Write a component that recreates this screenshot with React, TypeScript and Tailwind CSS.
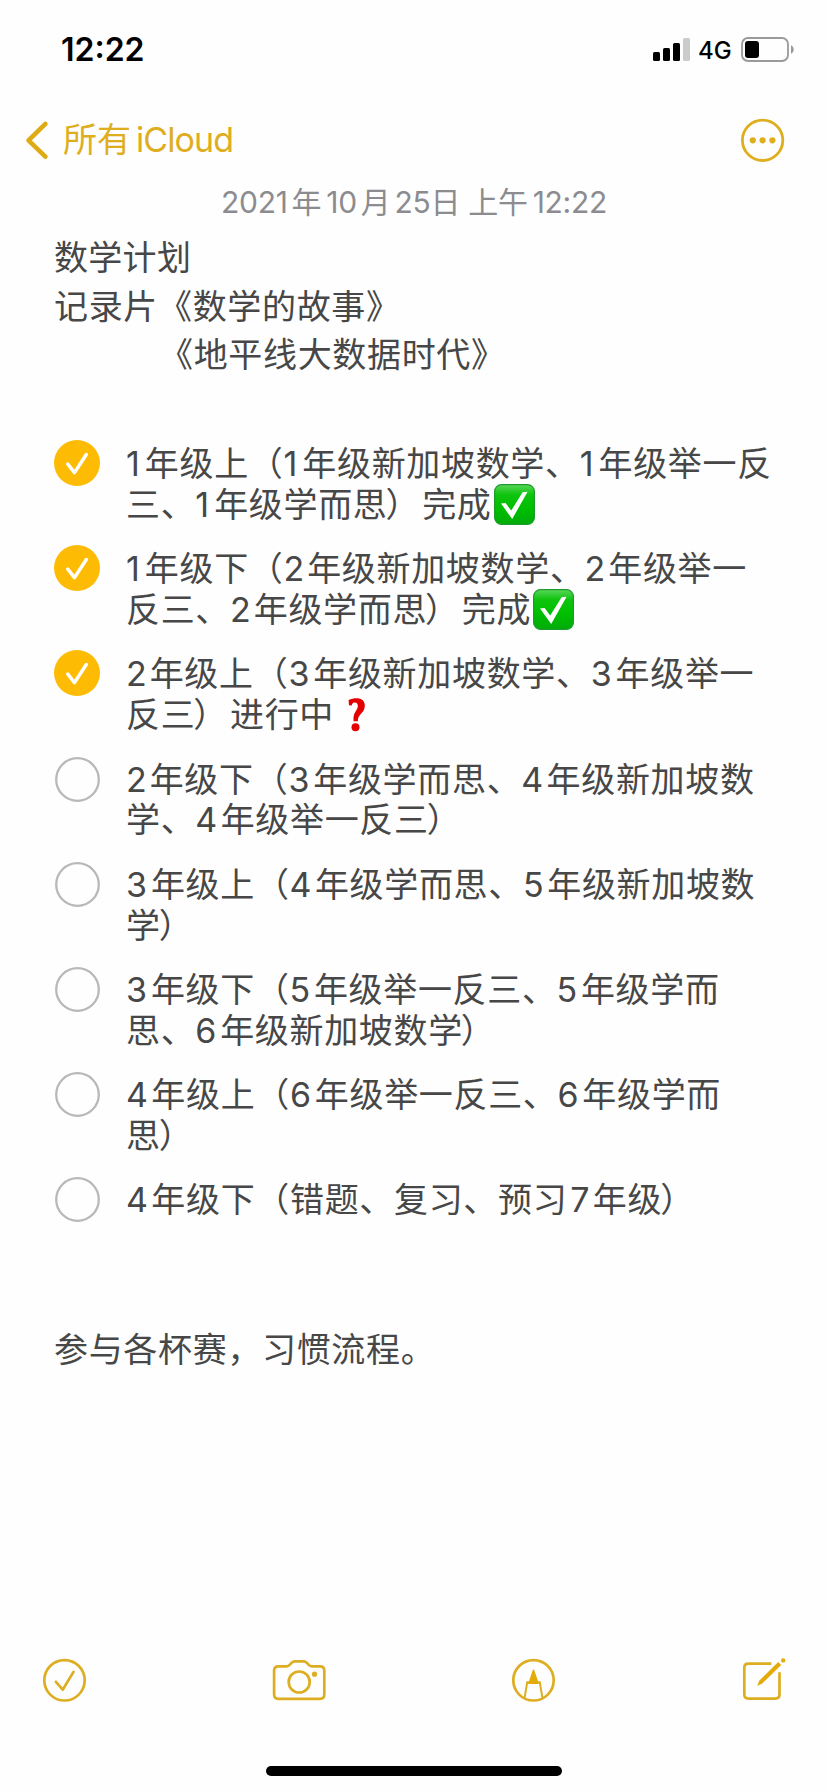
import React from "react";

type Item = {
  done: boolean;
  lines: string[];
};

const items: Item[] = [
  { done: true, lines: ["1年级上（1年级新加坡数学、1年级举一反", "三、1年级学而思）完成✅"] },
  { done: true, lines: ["1年级下（2年级新加坡数学、2年级举一", "反三、2年级学而思）完成✅"] },
  { done: true, lines: ["2年级上（3年级新加坡数学、3年级举一", "反三）进行中❓"] },
  { done: false, lines: ["2年级下（3年级学而思、4年级新加坡数", "学、4年级举一反三）"] },
  { done: false, lines: ["3年级上（4年级学而思、5年级新加坡数", "学）"] },
  { done: false, lines: ["3年级下（5年级举一反三、5年级学而", "思、6年级新加坡数学）"] },
  { done: false, lines: ["4年级上（6年级举一反三、6年级学而", "思）"] },
  { done: false, lines: ["4年级下（错题、复习、预习7年级）"] },
];

const digitWidth: Record<string, string> = {
  "1": "w-[18.8px]",
  "2": "w-[23.7px]",
  "3": "w-[24.9px]",
  "4": "w-[25.3px]",
  "5": "w-[24.3px]",
  "6": "w-[24.8px]",
  "7": "w-[25.5px] pl-[3px]",
};

const CheckEmoji = () => (
  <svg width="41" height="41" viewBox="0 0 41 41" className="ml-[2px] inline-block align-[-8px]">
    <defs>
      <linearGradient id="green" x1="0" y1="0" x2="0" y2="1">
        <stop offset="0" stopColor="#5bd65b" />
        <stop offset="0.25" stopColor="#0fc40f" />
        <stop offset="0.6" stopColor="#00bf00" />
        <stop offset="1" stopColor="#00ac0a" />
      </linearGradient>
    </defs>
    <rect x="0.6" y="0.6" width="39.8" height="39.8" rx="7" fill="url(#green)" stroke="#1c9c2a" strokeWidth="1.2" />
    <path d="M7 19.6l4.6-.6 5.6 7.6L28.600 8.200l5-.4L18.200 35z" fill="#fff" />
  </svg>
);

const QuestionEmoji = () => (
  <svg width="18" height="34" viewBox="0 0 18 34" className="ml-[14px] inline-block align-[-5px]">
    <path
      d="M.6 2C4 .4 7 0 9.600.2c4.800.4 7.400 3.400 7.200 7.600-.2 4.400-2.200 6.400-4.600 9-1.800 2-2.200 3.400-2.400 6.400H5.600c-.4-4.400.2-6.800 2-9.600 1.600-2.400 2.400-4 2.200-6-.2-2.400-1.400-3.400-3.400-3.200-1.600.2-2.400 1.200-2.600 3L1 7.200z"
      fill="#e30000"
    />
    <circle cx="7.500" cy="29.200" r="4" fill="#e30000" />
  </svg>
);

const Line = ({ text }: { text: string }) => (
  <p className="h-[40.700px] whitespace-nowrap">
    {Array.from(text).map((ch, i) => {
      if (ch === "✅") return <CheckEmoji key={i} />;
      if (ch === "❓") return <QuestionEmoji key={i} />;
      if (digitWidth[ch]) {
        return (
          <span key={i} className={`inline-block tracking-normal ${digitWidth[ch]}`}>
            {ch}
          </span>
        );
      }
      // closing bracket sits tighter to the character before it
      if (ch === "）") {
        return (
          <span key={i} className="mr-[2px] -ml-[2px]">
            {ch}
          </span>
        );
      }
      return ch;
    })}
  </p>
);

const Bullet = ({ done }: { done: boolean }) =>
  done ? (
    <svg width="46" height="46" viewBox="0 0 46 46" className="shrink-0">
      <circle cx="23" cy="23" r="23" fill="#fdbb04" />
      <path d="M13.700 24l6.800 8.600L32.300 14.500" fill="none" stroke="#fff" strokeWidth="3.500" strokeLinecap="round" strokeLinejoin="round" />
    </svg>
  ) : (
    <svg width="46" height="46" viewBox="0 0 46 46" className="shrink-0">
      <circle cx="23.500" cy="23.500" r="21.300" fill="none" stroke="#b8b8b8" strokeWidth="2.300" />
    </svg>
  );

const StatusBar = () => (
  <div className="flex h-[98px] justify-between pl-[61px] pr-[34px] text-black">
    <span className="mt-[30px] font-[Inter] text-[32px] leading-[40px] font-semibold">12:22</span>
    <div className="mt-[37px] flex h-[25px] items-start">
      <svg width="38" height="25" viewBox="0 0 38 25">
        <rect x="0" y="15" width="7" height="9" rx="1.500" />
        <rect x="10" y="11" width="7" height="13" rx="1.500" />
        <rect x="20" y="6" width="7" height="18" rx="1.500" />
        <rect x="30" y="1" width="7" height="23" rx="1.500" fill="#cbcbcb" />
      </svg>
      <span className="ml-[7px] w-[43px] font-[Inter] text-[24px] leading-[27px] font-medium">4G</span>
      <svg width="53" height="25" viewBox="0 0 53 25">
        <rect x="1" y="1" width="46" height="23" rx="6" fill="none" stroke="#9a9a9a" strokeWidth="1.800" />
        <rect x="4" y="4" width="14" height="17" rx="3" />
        <path d="M50 8.300c3.600 1.400 3.600 7 0 8.400z" fill="#9a9a9a" />
      </svg>
    </div>
  </div>
);

const NavBar = () => (
  <div className="flex h-[84px] items-center justify-between pr-[43px] pl-[25px] text-[#dfae1f]">
    <button className="flex items-center">
      <svg width="24" height="40" viewBox="0 0 24 40" fill="none" stroke="#dfab14" strokeWidth="4.600" strokeLinecap="round" strokeLinejoin="round">
        <path d="M20.400 3.900L3.500 20.300l16.900 16.400" />
      </svg>
      <span className="ml-[14px] text-[34px] leading-[44px] whitespace-nowrap">
        所有<span className="ml-[5px] tracking-[-0.9px]">iCloud</span>
      </span>
    </button>
    <svg width="44" height="44" viewBox="0 0 44 44">
      <circle cx="21.600" cy="22.300" r="20.200" fill="none" stroke="currentColor" strokeWidth="2.800" />
      <circle cx="11.800" cy="22.300" r="3.100" fill="currentColor" />
      <circle cx="21.600" cy="22.300" r="3.100" fill="currentColor" />
      <circle cx="31.400" cy="22.300" r="3.100" fill="currentColor" />
    </svg>
  </div>
);

const Toolbar = () => (
  <div className="flex items-center justify-between pr-[42px] pl-[42px] text-[#ddae22]">
    <svg width="44" height="44" viewBox="0 0 44 44" fill="none" stroke="currentColor" strokeWidth="2.700" strokeLinecap="round" strokeLinejoin="round">
      <circle cx="22.500" cy="22.300" r="20.200" />
      <path d="M13.900 23.800l6.800 7.900 10.800-17.800" />
    </svg>
    <svg width="54" height="44" viewBox="0 0 54 44" fill="none" stroke="currentColor" strokeWidth="2.700" strokeLinejoin="round">
      <path d="M6.300 8.300h8.300c1.600 0 2.400-.7 3.300-1.700l1.900-2c.8-.8 1.500-1.200 2.800-1.200h9.200c1.300 0 2 .4 2.800 1.200l1.900 2c.9 1 1.700 1.700 3.300 1.700h8.300c2.700 0 4.200 1.500 4.200 4.200v24.100c0 2.700-1.500 4.200-4.200 4.200H6.300c-2.700 0-4.200-1.500-4.200-4.200V12.500c0-2.700 1.500-4.200 4.200-4.200z" />
      <circle cx="27.200" cy="24" r="10.500" />
      <circle cx="42.500" cy="16.200" r="2.600" fill="currentColor" stroke="none" />
    </svg>
    <svg width="44" height="44" viewBox="0 0 44 44" fill="none" stroke="currentColor" strokeWidth="2.700">
      <circle cx="21.500" cy="22.300" r="20.200" />
      <path d="M20.600 12.500c.4-1.300 1.400-1.300 1.800 0l4.600 13.400H16z" fill="#e3ab08" stroke="none" />
      <path d="M17 24.300h-1.800l-2.600 15.500M26 24.300h1.800l2.600 15.500" strokeWidth="2" />
    </svg>
    <svg width="44" height="44" viewBox="0 0 44 44" fill="none" stroke="currentColor" strokeWidth="2.700">
      <path d="M29.300 5.700H6.400c-2.700 0-4.100 1.400-4.100 4.100v26.800c0 2.700 1.400 4.100 4.100 4.100h27c2.700 0 4.100-1.400 4.100-4.100V14.200" />
      <path d="M36.200 3.900l3 3L20.200 25.600l-5 2.400 2-5.200z" fill="#e3ab08" stroke="none" />
      <circle cx="41.200" cy="2.400" r="2.200" fill="#e3ab08" stroke="none" />
    </svg>
  </div>
);

export default function App() {
  return (
    <div
      lang="zh-CN"
      className="flex h-[1792px] w-[828px] flex-col overflow-hidden bg-[#fefefe] font-[Inter,'Noto_Sans_CJK_SC',sans-serif]"
    >
      <StatusBar />
      <NavBar />

      <p className="h-[40px] text-center text-[30px] leading-[40px] tracking-[-0.3px] whitespace-nowrap text-[#8c8c90]">
        2021<span className="mr-[5px] ml-[4px]">年</span>10<span className="mx-[4px]">月</span>25日 上午
        <span className="ml-[5px]">12:22</span>
      </p>

      <main className="text-[34px] tracking-[0.67px] text-[#474747]">
        <div className="mt-[12px] pl-[54px] leading-[48.700px] whitespace-nowrap">
          <h1 className="tracking-[0.3px]">数学计划</h1>
          <p>记录片《数学的故事》</p>
          <p className="pl-[105px]">《地平线大数据时代》</p>
        </div>

        <ul className="mt-[63px] pl-[54px] leading-[41px]">
          {items.map((item, i) => (
            <li key={i} className="flex h-[105.200px] items-start">
              <div className="-mt-[3px] h-[46px]">
                <Bullet done={item.done} />
              </div>
              <div className="ml-[26px]">
                {item.lines.map((line) => (
                  <Line key={line} text={line} />
                ))}
              </div>
            </li>
          ))}
        </ul>

        <p className="mt-[41px] pl-[54px] leading-[48px]">参与各杯赛，习惯流程。</p>
      </main>

      <footer className="mt-auto">
        <Toolbar />
        <div className="mx-auto mt-[64px] mb-[16px] h-[10px] w-[296px] rounded-full bg-black" />
      </footer>
    </div>
  );
}
